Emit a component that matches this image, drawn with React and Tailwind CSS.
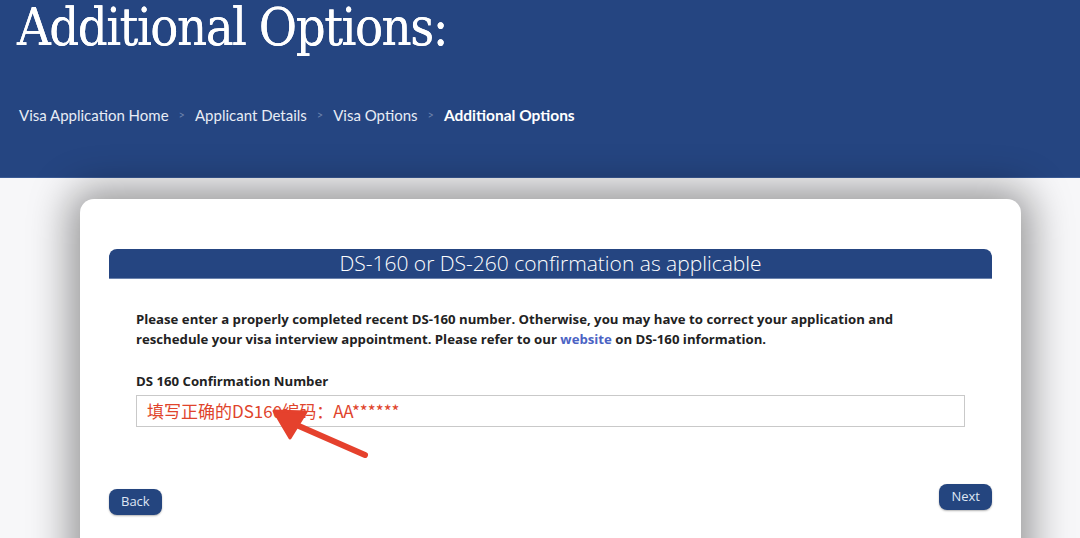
import React from "react";

function Arrow() {
  return (
    <svg className="absolute left-[262px] top-[398px]" width="112" height="64" viewBox="0 0 112 64">
      <path d="M103 57 L30 25" stroke="#e5412d" strokeWidth="6" strokeLinecap="round" />
      <path d="M12 13 L44 14 L28 40 Z" fill="#e5412d" stroke="#e5412d" strokeWidth="3" strokeLinejoin="round" />
    </svg>
  );
}

export default function App() {
  const crumbs = ["Visa Application Home", "Applicant Details", "Visa Options"];
  return (
    <div className="relative w-[1080px] h-[538px] overflow-hidden bg-[#f7f7f9] font-['Open_Sans',sans-serif]">
      <header className="h-[178px] bg-[#254581] px-[17px] border-b border-[#3a5a94]">
        <h1 className="font-['DejaVu_Serif',serif] [font-stretch:condensed] text-[52px] leading-none text-white pt-[1px] tracking-[-1.5px] [text-shadow:0_0_0.6px_white]">
          Additional Options:
        </h1>
        <nav className="flex items-center mt-[51px] ml-[2px] font-['Lato',sans-serif] text-[15px] text-[#e8ecf5]">
          {crumbs.map((c) => (
            <React.Fragment key={c}>
              <span>{c}</span>
              <span className="mx-[10px] text-[11px] text-[#6d83ad]">&gt;</span>
            </React.Fragment>
          ))}
          <span className="font-bold text-white text-[15.5px]">Additional Options</span>
        </nav>
      </header>

      <main className="px-[80px] pt-[21px]">
        <section className="bg-white rounded-t-[14px] w-[941px] h-[400px] shadow-[0_0_40px_10px_rgba(0,0,0,0.4)] px-[29px] pt-[50px]">
          <div className="h-[30px] bg-[#254581] rounded-t-[8px] flex items-center justify-center text-white font-light text-[21px] border-b border-[#6c83ad]">
            DS-160 or DS-260 confirmation as applicable
          </div>
          <div className="px-[27px] pt-[30px] text-[13.2px] font-bold text-[#222] leading-[20px]">
            <p className="w-[775px]">
              Please enter a properly completed recent DS-160 number. Otherwise, you may have to correct your application and
              reschedule your visa interview appointment. Please refer to our{" "}
              <a className="text-[#4b63c4]">website</a> on DS-160 information.
            </p>
            <label className="block mt-[22px]">DS 160 Confirmation Number</label>
            <div className="mt-[4px] h-[32px] border border-[#c9c9c9] flex items-center px-[10px] font-['Noto_Sans_CJK_SC',sans-serif] font-normal text-[17px] text-[#e0442c]">
              填写正确的DS160编码：AA******
            </div>
          </div>
          <div className="flex justify-between items-start mt-[57px]">
            <button className="mt-[5px] h-[26px] px-[12px] rounded-[8px] bg-[#24457f] text-[#dfe6f4] text-[13px] shadow-[0_1px_2px_rgba(0,0,0,0.3)]">
              Back
            </button>
            <button className="h-[26px] px-[12px] rounded-[8px] bg-[#24457f] text-[#dfe6f4] text-[13px] shadow-[0_1px_2px_rgba(0,0,0,0.3)]">
              Next
            </button>
          </div>
        </section>
      </main>
      <Arrow />
    </div>
  );
}
